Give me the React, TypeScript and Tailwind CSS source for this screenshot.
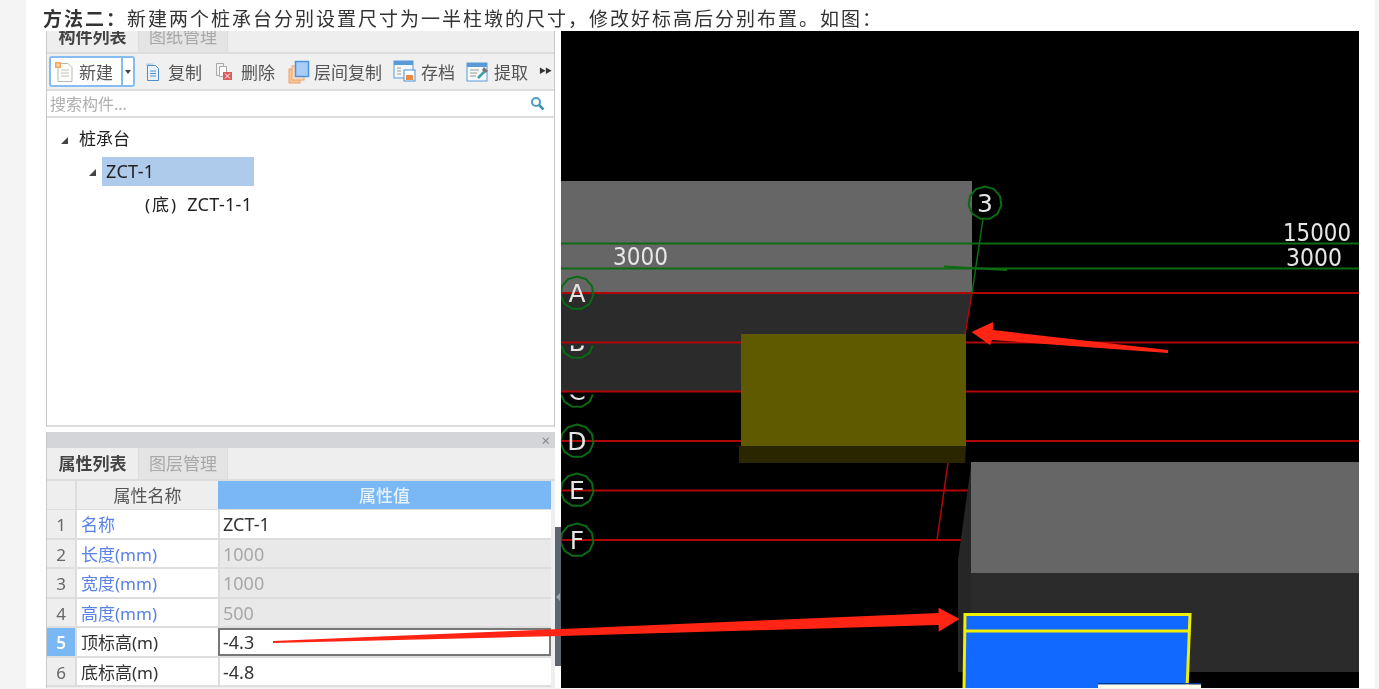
import React from 'react';

const cjk = "font-['Noto_Sans','Noto_Sans_CJK_SC',sans-serif]";

function NewIcon() {
  return (
    <svg width="22" height="22" viewBox="0 0 22 22">
      <path d="M4 2.500h10l4 4v14H4z" fill="#fdfdfb" stroke="#b9b9b2" />
      <path d="M7 9h8M7 12h8M7 15h8" stroke="#c4c4bc" />
      <rect x="1" y="1" width="6" height="6" fill="#f2a65e" />
      <rect x="2.500" y="2.500" width="3" height="3" fill="#fbd9ae" />
    </svg>
  );
}

function CopyIcon() {
  return (
    <svg width="18" height="20" viewBox="0 0 18 20">
      <path d="M2 1.500h7v2H2z" fill="#bcd0e4" />
      <path d="M3.500 3.500h8l3 3v12h-11z" fill="#eaf3fb" stroke="#4f8fc9" />
      <path d="M6 9h6M6 11.500h6M6 14h6" stroke="#4f8fc9" />
    </svg>
  );
}

function DeleteIcon() {
  return (
    <svg width="20" height="20" viewBox="0 0 20 20">
      <path d="M1.500 1.500h7v12h-7z" fill="#f3f3f3" stroke="#a9a9a9" />
      <path d="M4.500 4.500h7v10h-7z" fill="#fafafa" stroke="#a9a9a9" />
      <rect x="8" y="10" width="9" height="8" fill="#dd5a5a" />
      <path d="M10 11.500l5 5M15 11.500l-5 5" stroke="#fff" />
    </svg>
  );
}

function FloorCopyIcon() {
  return (
    <svg width="22" height="24" viewBox="0 0 22 24">
      <rect x="1" y="9" width="11" height="14" fill="#f6c79c" stroke="#eda263" />
      <rect x="4" y="6" width="12" height="14" fill="#fbdcc0" stroke="#eda263" />
      <rect x="7.500" y="1.500" width="13" height="15" fill="#a9cdf4" stroke="#4d93e0" strokeWidth="1.500" />
    </svg>
  );
}

function SaveIcon() {
  return (
    <svg width="24" height="23" viewBox="0 0 24 23">
      <rect x="1" y="1" width="19" height="17" fill="#f5f8fb" stroke="#5a9ad8" />
      <rect x="1" y="1" width="19" height="4" fill="#5a9ad8" />
      <path d="M4 8h4M4 11h4M4 14h4" stroke="#9a9a9a" />
      <rect x="11" y="10" width="11" height="11" fill="#fff" stroke="#4a8fd6" />
      <rect x="13" y="15" width="7" height="5" fill="#ee8a3c" />
    </svg>
  );
}

function ExtractIcon() {
  return (
    <svg width="24" height="22" viewBox="0 0 24 22">
      <rect x="1" y="2" width="20" height="18" fill="#f5f8fb" stroke="#5a9ad8" />
      <rect x="1" y="2" width="20" height="4" fill="#5a9ad8" />
      <path d="M4 9h9M4 12h7M4 15h6" stroke="#9a9a9a" />
      <path d="M12 17l7-7" stroke="#3fa0a8" strokeWidth="2.500" />
      <path d="M18 6l4 4-3 2-3-3z" fill="#777" />
    </svg>
  );
}

function ToolButton({ icon, label, className }: { icon: React.ReactNode; label: string; className: string }) {
  return (
    <div className={`flex items-center text-[17px] text-[#555] ${className}`}>
      {icon}
      <span className="pt-[2px]">{label}</span>
    </div>
  );
}

function Caret() {
  return <span className="mt-[2px] h-0 w-0 border-b-[7px] border-l-[7px] border-b-[#444] border-l-transparent" />;
}

function TopPanel() {
  return (
    <div className="flex flex-1 flex-col border-x border-b-2 border-[#c8c8c8] border-b-[#dddddd] bg-white">
      <div className="flex h-[21px] items-stretch overflow-hidden bg-[#eeeeee] text-[17px] leading-[12px]">
        <div className="w-[91px] text-center font-semibold text-[#444]">构件列表</div>
        <div className="w-[90px] border-x border-[#dddddd] bg-[#e4e4e4] text-center text-[#a8a8a8]">图纸管理</div>
      </div>
      <div className="flex h-[39px] items-center border-y-2 border-[#dddddd] bg-[#f0f0f0] pl-[2px]">
        <div className="flex h-[31px] w-[86px] rounded-[3px] border-2 border-[#86bdf0] bg-white">
          <div className="flex flex-1 items-center gap-[3px] pl-[3px] text-[17px] text-[#555]">
            <NewIcon />
            <span className="pt-[2px]">新建</span>
          </div>
          <div className="flex w-[12px] items-center justify-center border-l-2 border-[#86bdf0]">
            <span className="h-0 w-0 border-x-[3px] border-t-[4px] border-x-transparent border-t-[#444]" />
          </div>
        </div>
        <ToolButton icon={<CopyIcon />} label="复制" className="ml-[9px] gap-[6px]" />
        <ToolButton icon={<DeleteIcon />} label="删除" className="ml-[13px] gap-[6px]" />
        <ToolButton icon={<FloorCopyIcon />} label="层间复制" className="ml-[13px] gap-[4px]" />
        <ToolButton icon={<SaveIcon />} label="存档" className="ml-[11px] gap-[4px]" />
        <ToolButton icon={<ExtractIcon />} label="提取" className="ml-[11px] gap-[4px]" />
        <span className="ml-[11px] text-[7px] tracking-[-1px] text-[#333]">▶▶</span>
      </div>
      <div className="flex h-[27px] items-center justify-between border-b-2 border-[#dddddd] pl-[3px] pr-[9px] text-[16px] text-[#b0b0b0]">
        <span className="pt-[1px]">搜索构件...</span>
        <svg width="15" height="15" viewBox="0 0 15 15" fill="none">
          <circle cx="6" cy="6" r="4" stroke="#4b9cc8" strokeWidth="2" />
          <path d="M9 9l4.500 4.500" stroke="#3f8db8" strokeWidth="2.500" />
        </svg>
      </div>
      <div className="flex flex-1 flex-col pl-[14px] pt-[4px] text-[17px] text-[#222]">
        <div className="flex h-[34px] items-center gap-[11px]">
          <Caret />
          <span>桩承台</span>
        </div>
        <div className="mt-[1px] flex items-center gap-[6px] pl-[28px]">
          <Caret />
          <span className="flex h-[29px] w-[152px] items-center bg-[#afcbec] pl-[4px] text-[18px] tracking-[0.300px]">ZCT-1</span>
        </div>
        <div className="flex h-[37px] items-center gap-[9px] pl-[84px]">
          <span className="tracking-[2px]">(底)</span>
          <span className="text-[18px] tracking-[0.300px]">ZCT-1-1</span>
        </div>
      </div>
    </div>
  );
}

const rows = [
  { no: '1', name: '名称', value: 'ZCT-1', locked: false, link: true },
  { no: '2', name: '长度(mm)', value: '1000', locked: true, link: true },
  { no: '3', name: '宽度(mm)', value: '1000', locked: true, link: true },
  { no: '4', name: '高度(mm)', value: '500', locked: true, link: true },
  { no: '5', name: '顶标高(m)', value: '-4.3', locked: false, link: false, active: true },
  { no: '6', name: '底标高(m)', value: '-4.8', locked: false, link: false },
];

function BottomPanel() {
  return (
    <div className="mt-[5px] flex h-[256px] flex-col border-l border-[#c8c8c8] bg-[#eeeeee]">
      <div className="flex h-[16px] items-center justify-end bg-[#d3d5d8] pr-[5px] text-[15px] leading-none text-[#888]">×</div>
      <div className="flex h-[33px] border-b-2 border-[#dddddd] text-[17px]">
        <div className="flex w-[91px] items-center justify-center font-semibold text-[#444]">属性列表</div>
        <div className="flex w-[90px] items-center justify-center border-x border-[#dddddd] bg-[#e4e4e4] text-[#a8a8a8]">图层管理</div>
      </div>
      <div className="flex w-[504px] flex-col text-[17px]">
        <div className="flex h-[29px] border-b border-[#dddddd]">
          <div className="w-[30px] border-r-2 border-[#dddddd]" />
          <div className="flex w-[141px] items-center justify-center pt-[2px] text-[#555]">属性名称</div>
          <div className="flex flex-1 items-center justify-center bg-[#7ab8f5] pt-[2px] font-medium text-[#e6f1fc]">属性值</div>
        </div>
        {rows.map((row) => (
          <div key={row.no} className="flex h-[29.500px] border-b-2 border-[#dddddd]">
            <div
              className={`flex w-[30px] items-center justify-center border-r-2 border-[#dddddd] pt-[2px] ${
                row.active ? 'bg-[#7ab8f5] font-semibold text-white' : 'bg-[#eeeeee] text-[#666]'
              }`}
            >
              {row.no}
            </div>
            <div className={`flex w-[141px] items-center bg-white pl-[4px] pt-[2px] ${row.link ? 'text-[#5a82e6]' : 'text-[#333]'}`}>
              {row.name}
            </div>
            <div
              className={`flex flex-1 items-center pl-[3px] pt-[2px] text-[18px] ${
                row.locked ? 'bg-[#e9e9e9] text-[#a8a8a8]' : 'bg-white text-[#333]'
              } ${row.active ? 'border-2 border-[#777]' : 'border-l-2 border-[#dddddd]'}`}
            >
              {row.value}
            </div>
          </div>
        ))}
      </div>
    </div>
  );
}

function GridBubble({ cx, cy, label, clipY }: { cx: number; cy: number; label: string; clipY?: number }) {
  const points: string[] = [];
  for (let i = 0; i < 11; i++) {
    const a = (i / 11) * Math.PI * 2 - Math.PI / 2;
    points.push(`${cx + 16.500 * Math.cos(a)},${cy + 16.500 * Math.sin(a)}`);
  }
  const clip = clipY !== undefined ? `inset(${clipY - cy + 20}px 0 0 0)` : undefined;
  return (
    <g style={{ clipPath: clip }}>
      <polygon points={points.join(' ')} fill="none" stroke="#0b6b12" strokeWidth="2" />
      <text x={cx} y={cy + 9} textAnchor="middle" fontSize="25" fill="#e4e4e4" fontFamily="DejaVu Sans">
        {label}
      </text>
    </g>
  );
}

// the svg's viewBox is in page coordinates, the canvas sits at (561, 31)
function Viewport() {
  return (
    <svg className="h-[657px] w-[798px] shrink-0 bg-black" viewBox="561 31 798 657">
      {/* upper slab */}
      <rect x="561" y="181" width="411" height="111" fill="#666666" />
      <polygon points="561,292 972,292 965,335 965,391 561,391" fill="#2b2b2b" />

      {/* grid lines */}
      <path d="M561 243.500H1359M561 268.500H1359" stroke="#0d6b12" strokeWidth="2" />
      <path d="M944 266.500L1007 270" stroke="#0d6b12" strokeWidth="2" />
      <path d="M561 293H1359M561 342.500H1359M561 391.500H1359M561 441H1359" stroke="#b00606" strokeWidth="2" />
      <path d="M561 490.500H968M561 540H965" stroke="#b00606" strokeWidth="2" />
      <path d="M983 219L972 293" stroke="#0d6b12" strokeWidth="1.500" />
      <path d="M972 293L965 335M948 463L937 540" stroke="#b00808" strokeWidth="1.500" />

      <GridBubble cx={577} cy={293} label="A" />
      <GridBubble cx={577} cy={342} label="B" clipY={343} />
      <GridBubble cx={577} cy={391} label="C" clipY={392} />
      <GridBubble cx={577} cy={441} label="D" />
      <GridBubble cx={577} cy={490} label="E" />
      <GridBubble cx={577} cy={540} label="F" />
      <GridBubble cx={985} cy={203} label="3" />

      <text x="613" y="265" fontSize="25" fill="#e6e6e6" fontFamily="DejaVu Sans" textLength="55" lengthAdjust="spacingAndGlyphs">3000</text>
      <text x="1283" y="241" fontSize="25" fill="#e6e6e6" fontFamily="DejaVu Sans" textLength="68" lengthAdjust="spacingAndGlyphs">15000</text>
      <text x="1286" y="266" fontSize="25" fill="#e6e6e6" fontFamily="DejaVu Sans" textLength="56" lengthAdjust="spacingAndGlyphs">3000</text>

      {/* olive block */}
      <polygon points="739,446 966,446 965,463 739,463" fill="#2a2600" />
      <rect x="741" y="334" width="225" height="112" fill="#5f5a00" />

      {/* lower slab */}
      <polygon points="971.500,462 958,560 958,672 971.500,672" fill="#262626" />
      <rect x="971" y="462" width="388" height="111" fill="#666666" />
      <rect x="971" y="573" width="388" height="99" fill="#2b2b2b" />

      {/* selected pile cap */}
      <polygon points="965,614 1190,614 1187,688 964,688" fill="#1269ff" />
      <path d="M964 690L965 614.500H1190L1187 690M965 631H1188" fill="none" stroke="#f0f000" strokeWidth="3" />
      <rect x="1098" y="683" width="103" height="1.500" fill="#063a8c" />
      <rect x="1098" y="684.500" width="103" height="4" fill="#fdfde8" />

      {/* red annotation arrows */}
      <polygon points="971.500,332 993,322 993,330 1168,350 1168,353 992,340 990,345" fill="#ff2414" />
      <polygon points="561,629 938.600,613 938.600,607.700 959.500,619 938.600,631.700 938.600,625 561,636" fill="#ff2414" />
    </svg>
  );
}

export default function App() {
  return (
    <div className={`h-[689px] w-[1379px] overflow-hidden bg-[#f4f4f4] ${cjk}`}>
      <div className="relative ml-[26px] h-[688px] w-[1349px] bg-white blur-[0.4px]">
        <div className="flex h-[31px] items-center pl-[17px] pt-[7px] text-[19px] tracking-[2px] text-[#333]">
          <span className="font-bold">方法二：</span>
          <span>新建两个桩承台分别设置尺寸为一半柱墩的尺寸，修改好标高后分别布置。如图：</span>
        </div>
        <div className="flex h-[657px] pl-[20px]">
          <div className="flex w-[509px] flex-col">
            <TopPanel />
            <BottomPanel />
          </div>
          <div className="relative w-[6px]">
            <div className="absolute left-0 top-[496px] flex h-[139px] w-[6px] items-center justify-center bg-[#5d6670]">
              <span className="h-0 w-0 border-y-[4px] border-r-[4px] border-y-transparent border-r-[#9aa3aa]" />
            </div>
          </div>
          <Viewport />
        </div>
        {/* the arrow crosses from the table into the viewport */}
        <svg className="pointer-events-none absolute left-[-26px] top-0 h-[688px] w-[561px]" viewBox="0 0 561 688">
          <polygon points="273,641 561,629 561,636 273,643" fill="#ff2414" />
        </svg>
      </div>
    </div>
  );
}
